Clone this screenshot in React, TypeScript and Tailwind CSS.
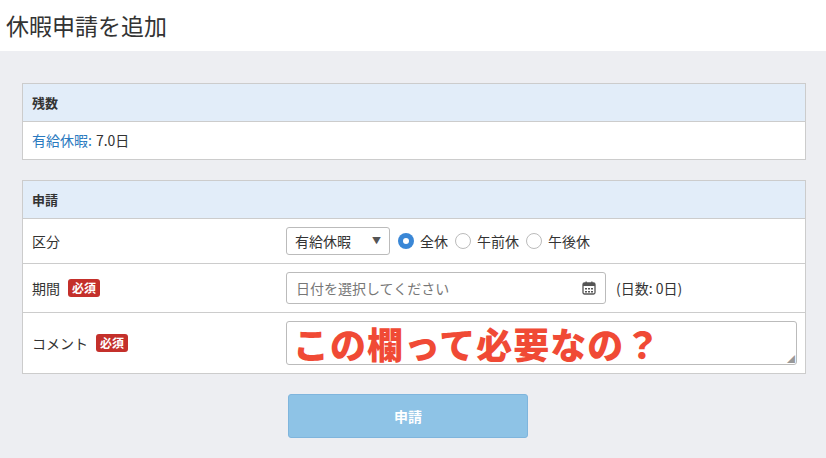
export default function App() {
  const font = { fontFamily: '"Noto Sans CJK JP", "Noto Sans", sans-serif' };
  const Req = () => (
    <span className="ml-2 inline-flex h-[18px] items-center rounded-[3px] bg-[#c4302b] px-1 text-[12px] font-bold leading-none text-white">必須</span>
  );
  return (
    <div style={font} className="h-[458px] w-[826px] overflow-hidden bg-[#edeef2] text-[#333]">
      <div className="flex h-[51px] items-center bg-white pl-[6px] text-[23px] text-[#333]">休暇申請を追加</div>
      <div className="px-[22px] pt-[32px] pr-[20px]">
        <div className="border border-[#ccc] bg-white">
          <div className="flex h-[38px] items-center border-b border-[#ccc] bg-[#e2edf9] px-[9px] text-[13px] font-bold">残数</div>
          <div className="flex h-[37px] items-center px-[9px] text-[14px]"><span className="text-[#2a7ac0]">有給休暇:</span><span className="ml-1">7.0日</span></div>
        </div>
        <div className="mt-[20px] border border-[#ccc] bg-white text-[14px]">
          <div className="flex h-[38px] items-center border-b border-[#ccc] bg-[#e2edf9] px-[9px] text-[13px] font-bold">申請</div>
          <div className="flex h-[45px] items-center border-b border-[#ccc]">
            <div className="w-[263px] px-[9px]">区分</div>
            <div className="flex items-center">
              <div className="flex h-[28px] w-[104px] items-center justify-between rounded-[3px] border border-[#bbb] px-[8px]">
                <span>有給休暇</span><span className="text-[9px] text-[#555]">▼</span>
              </div>
              <span className="ml-[8px] inline-flex h-[16px] w-[16px] items-center justify-center rounded-full bg-[#3a87d6]"><span className="h-[6px] w-[6px] rounded-full bg-white" /></span>
              <span className="ml-[6px]">全休</span>
              <span className="ml-[7px] h-[16px] w-[16px] rounded-full border border-[#bbb]" />
              <span className="ml-[6px]">午前休</span>
              <span className="ml-[7px] h-[16px] w-[16px] rounded-full border border-[#bbb]" />
              <span className="ml-[6px]">午後休</span>
            </div>
          </div>
          <div className="flex h-[49px] items-center border-b border-[#ccc]">
            <div className="flex w-[263px] items-center px-[9px]">期間<Req /></div>
            <div className="flex h-[32px] w-[320px] items-center justify-between rounded-[3px] border border-[#bbb] px-[9px] text-[#777]">
              <span>日付を選択してください</span>
              <svg width="14" height="14" viewBox="0 0 14 14" fill="#555"><rect x="1" y="2" width="12" height="11" rx="1.5" fill="none" stroke="#555" strokeWidth="1.3"/><rect x="1" y="2" width="12" height="3"/><rect x="3.5" y="0.5" width="1.3" height="3"/><rect x="9.2" y="0.5" width="1.3" height="3"/><rect x="3" y="7" width="2" height="1.5"/><rect x="6" y="7" width="2" height="1.5"/><rect x="9" y="7" width="2" height="1.5"/><rect x="3" y="10" width="2" height="1.5"/><rect x="6" y="10" width="2" height="1.5"/><rect x="9" y="10" width="2" height="1.5"/></svg>
            </div>
            <span className="ml-[10px]">(日数: 0日)</span>
          </div>
          <div className="flex h-[60px] items-center">
            <div className="flex w-[263px] items-center px-[9px]">コメント<Req /></div>
            <div className="relative flex h-[44px] w-[511px] items-center rounded-[3px] border border-[#bbb] px-[6px]">
              <span className="text-[36px] font-black leading-none tracking-[1px] text-[#f04a35]">この欄って必要なの？</span>
              <span className="absolute bottom-[1px] right-[1px] text-[8px] leading-none text-[#999]">◢</span>
            </div>
          </div>
        </div>
        <div className="mt-[20px] flex justify-center pr-[12px]">
          <div className="flex h-[44px] w-[240px] items-center justify-center rounded-[3px] border border-[#7fb5dd] bg-[#8ec3e6] text-[14px] font-bold text-white">申請</div>
        </div>
      </div>
    </div>
  );
}
